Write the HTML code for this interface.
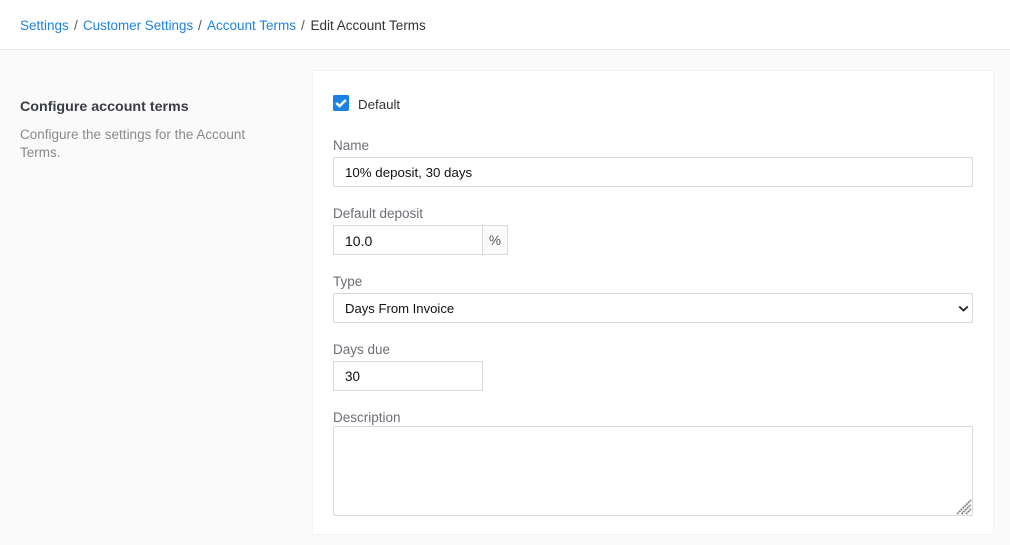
<!DOCTYPE html>
<html><head><meta charset="utf-8"><style>
html,body{margin:0;padding:0;width:1010px;height:545px;overflow:hidden;background:#fafafa;font-family:"Liberation Sans",sans-serif;font-size:13.5px}
.a{position:absolute;white-space:nowrap;line-height:18px}
.hdr{position:absolute;left:0;top:0;width:1010px;height:49px;background:#fff;border-bottom:1px solid #e8e8e8}
.card{position:absolute;left:313px;top:71px;width:680px;height:463px;background:#fff;box-shadow:0 0 0 1px #f3f3f3}
.l{color:#2083e0}.s{color:#555}.lb{color:#6b6f76}
.box{position:absolute;box-sizing:border-box;background:#fff;border:1px solid #d9d9d9;border-radius:2px}
.v{color:#111}
</style></head><body>
<div class="hdr"></div>
<div class="a l" style="left:20px;top:17px">Settings</div><div class="a s" style="left:74px;top:17px">/</div>
<div class="a l" style="left:83px;top:17px;font-size:13.4px">Customer Settings</div><div class="a s" style="left:198px;top:17px">/</div>
<div class="a l" style="left:207px;top:17px">Account Terms</div><div class="a s" style="left:301px;top:17px">/</div>
<div class="a" style="left:310.5px;top:17px;color:#333">Edit Account Terms</div>
<div class="a" style="left:20px;top:98px;font-weight:bold;font-size:14.25px;color:#3a3d42">Configure account terms</div>
<div class="a" style="left:20px;top:126px;color:#8a8a8a">Configure the settings for the Account</div>
<div class="a" style="left:20px;top:144px;color:#8a8a8a">Terms.</div>
<div class="card"></div>
<svg style="position:absolute;left:333px;top:95px" width="16" height="16" viewBox="0 0 16 16"><rect width="16" height="16" rx="1.5" fill="#1a82e2"/><path d="M3.2 8 6.6 11 12.8 5" fill="none" stroke="#fff" stroke-width="2.5"/></svg>
<div class="a" style="left:358px;top:96px;color:#333;font-size:13.3px">Default</div>
<div class="a lb" style="left:333px;top:137px">Name</div>
<div class="box" style="left:333px;top:157px;width:640px;height:30px"></div>
<div class="a v" style="left:345px;top:164px;font-size:13.3px">10% deposit, 30 days</div>
<div class="a lb" style="left:333px;top:205px">Default deposit</div>
<div class="box" style="left:333px;top:225px;width:150px;height:30px;border-radius:2px 0 0 2px"></div>
<div class="box" style="left:482px;top:225px;width:26px;height:30px;background:#fafafa;border-radius:0 2px 2px 0"></div>
<div class="a" style="left:489px;top:232px;color:#555">%</div>
<div class="a v" style="left:345px;top:232px;font-size:14px">10.0</div>
<div class="a lb" style="left:333px;top:273px">Type</div>
<div class="box" style="left:333px;top:293px;width:640px;height:30px"></div>
<div class="a v" style="left:345px;top:300px;font-size:13.1px">Days From Invoice</div>
<svg style="position:absolute;left:958px;top:305px" width="11" height="7" viewBox="0 0 11 7"><path d="M1.2 1.5 5.5 5.5 9.8 1.5" fill="none" stroke="#222" stroke-width="1.8"/></svg>
<div class="a lb" style="left:333px;top:341px">Days due</div>
<div class="box" style="left:333px;top:361px;width:150px;height:30px"></div>
<div class="a v" style="left:345px;top:368px">30</div>
<div class="a lb" style="left:333px;top:409px">Description</div>
<div class="box" style="left:333px;top:426px;width:640px;height:90px"></div>
<svg style="position:absolute;left:956px;top:499px" width="16" height="16" viewBox="0 0 16 16"><path d="M1 15 15 1M5.500 15 15 5.500M10 15 15 10" stroke="#888" stroke-width="1.8" stroke-dasharray="2 .6" fill="none"/></svg>
</body></html>
